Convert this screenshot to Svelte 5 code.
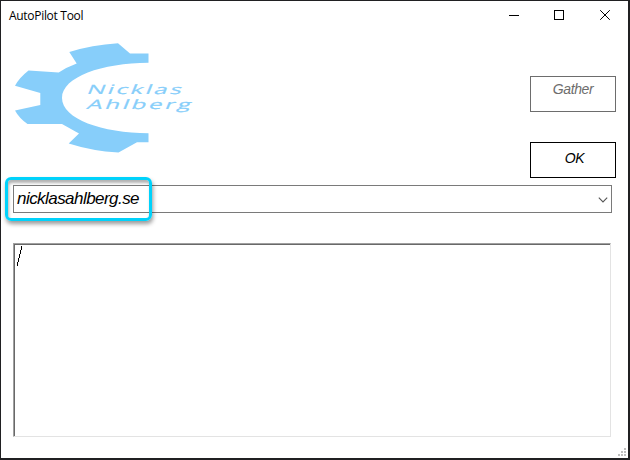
<script>
  let domain = 'nicklasahlberg.se';
</script>

<div class="desktop">
  <main class="window">
    <header>
      <h1>AutoPilot Tool</h1>
      <nav>
        <svg width="11" height="11" viewBox="0 0 11 11" shape-rendering="crispEdges"><path d="M0 5.5H10" /></svg>
        <svg width="11" height="11" viewBox="0 0 11 11" shape-rendering="crispEdges"><path d="M.5 .5H9.5V9.5H.5Z" /></svg>
        <svg width="11" height="11" viewBox="0 0 11 11"><path d="M.2 .2L9.8 9.8M9.8 .2L.2 9.8" /></svg>
      </nav>
    </header>

    <section class="top">
      <svg class="logo" width="185" height="116" viewBox="12 40 185 116">
        <path fill="#87cefa" d="M148.5 53.5H130L118 43.3Q92 45 69.3 52L76.7 63.5Q67 67 58.7 72.5L28.5 70.5Q19 78 15 85.8L40.3 93V105L15 110.5Q19 118 27.5 124H62L79 133.5L68.7 143.5Q92 151 118.5 152.5L137 142.3H148.5V133.2C102 133 62 119 62 98C62 77 102 63 148.5 62.8Z" />
        <g fill="#87cefa" stroke="#87cefa" stroke-width=".2" font-family="'Open Sans', sans-serif" font-size="13">
          <text transform="translate(86 94) skewX(-22) scale(1.85 1)" textLength="51" lengthAdjust="spacing">Nicklas</text>
          <text transform="translate(86 109) skewX(-22) scale(1.85 1)" textLength="56" lengthAdjust="spacing">Ahlberg</text>
        </g>
      </svg>
      <div class="actions">
        <button class="muted" disabled><span>Gather</span></button>
        <button><span>OK</span></button>
      </div>
    </section>

    <div class="combo">
      <span>{domain}</span>
      <svg width="10" height="6" viewBox="0 0 10 6"><path d="M.8 .7L5 4.9L9.2 .7" fill="none" stroke="#555" stroke-width="1.1" /></svg>
      <i class="highlight"></i>
    </div>

    <div class="output">
      <svg width="6" height="20" viewBox="0 0 6 20" shape-rendering="crispEdges"><path d="M5 0h1v4h-1zM4 4h1v4h-1zM3 8h1v4h-1zM2 12h1v4h-1zM1 16h1v4h-1z" /></svg>
    </div>

    <footer>
      <svg width="8" height="8" viewBox="0 0 8 8" shape-rendering="crispEdges" fill="#bfbfbf"><path d="M6 0h2v2h-2zM3 3h2v2h-2zM6 3h2v2h-2zM0 6h2v2h-2zM3 6h2v2h-2zM6 6h2v2h-2z" /></svg>
    </footer>
  </main>
</div>

<style>
  * { box-sizing: border-box; }
  .desktop {
    width: 630px;
    height: 460px;
    padding: 1px 2px 2px 1px;
    background: #202022;
    overflow: hidden;
    font-family: "Liberation Sans", Arial, sans-serif;
  }
  .window {
    height: 457px;
    background: #fff;
    display: flex;
    flex-direction: column;
    padding-left: 12px;
  }
  header {
    height: 39px;
    flex: none;
    display: flex;
    justify-content: space-between;
    padding: 9px 17px 0 0;
    margin-left: -4px;
  }
  h1 {
    margin: -1px 0 0;
    font: 400 12px/13px "Open Sans", "Noto Sans", sans-serif;
    letter-spacing: -0.3px;
    color: #000;
    white-space: nowrap;
  }
  nav { display: flex; gap: 35px; }
  nav svg { fill: none; stroke: #000; stroke-width: 1; }
  nav svg:first-child { margin-right: -1px; }
  svg { display: block; flex: none; }
  .top {
    height: 144px;
    flex: none;
    display: flex;
    justify-content: space-between;
    padding-right: 12px;
  }
  .logo { margin-left: -1px; }
  .actions { padding-top: 36px; display: flex; flex-direction: column; gap: 30px; }
  button {
    width: 86px;
    height: 36px;
    padding: 4px 0 0;
    display: flex;
    justify-content: center;
    border: 1px solid #000;
    border-radius: 0;
    background: #fff;
    color: #000;
    font: italic 14px/16px "Liberation Sans", Arial, sans-serif;
    letter-spacing: -0.4px;
  }
  button:last-child { padding-top: 7px; padding-left: 3px; }
  .muted { border-color: #6d6d6d; color: #6d6d6d; }
  .combo {
    position: relative;
    flex: none;
    width: 599px;
    height: 28px;
    margin-top: 1px;
    padding: 0 3px 0 3px;
    display: flex;
    align-items: center;
    justify-content: space-between;
    border: 1px solid #7a7a7a;
    font: italic 17px/20px "Liberation Sans", Arial, sans-serif;
    letter-spacing: -0.55px;
    color: #000;
  }
  .combo svg { margin-top: 2px; }
  .highlight {
    position: absolute;
    left: -9px;
    top: -9px;
    width: 147px;
    height: 44px;
    border: 3px solid #00d2fb;
    border-radius: 6px;
    box-shadow: 1px 3px 4px rgba(0, 0, 0, .4), inset 1px 3px 3px rgba(0, 0, 0, .3);
  }
  .output {
    flex: none;
    width: 598px;
    height: 194px;
    margin-top: 30px;
    padding: 2px 0 0 2px;
    border: 1px solid;
    border-color: #a0a0a0 #e3e3e3 #e3e3e3 #a0a0a0;
    box-shadow: inset 1px 1px #696969;
  }
  footer { margin-top: auto; padding: 0 2px 2px 0; display: flex; justify-content: flex-end; }
</style>
